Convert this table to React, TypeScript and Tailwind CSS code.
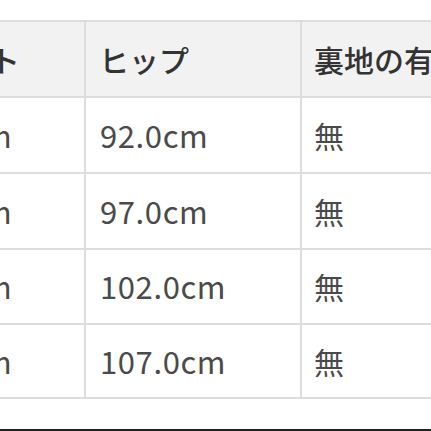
import React from 'react';

const rows = [
    { waist: '72.0cm', hip: '92.0cm', lining: '無', h: 'h-[76px]' },
    { waist: '77.0cm', hip: '97.0cm', lining: '無', h: 'h-[76px]' },
    { waist: '82.0cm', hip: '102.0cm', lining: '無', h: 'h-[75px]' },
    { waist: '87.0cm', hip: '107.0cm', lining: '無', h: 'h-[74px]' },
];

const App = () => {
    return (
        <div
            className="w-[431px] h-[431px] overflow-hidden bg-white flex flex-col"
            style={{ fontFamily: '"Noto Sans CJK JP", "Noto Sans", sans-serif' }}
        >
            <div className="pt-[20px] flex-1">
                <div className="-ml-[121px] w-[650px] grid grid-cols-[207px_216px_227px] border-t-2 border-[#dddddd]">
                    <div className="h-[76px] bg-[#f2f2f2] border-b-2 border-r-2 border-[#dddddd] flex items-center pl-[21px] text-[30px] font-medium text-[#333] whitespace-nowrap">
                        ウエスト
                    </div>
                    <div className="h-[76px] bg-[#f2f2f2] border-b-2 border-r-2 border-[#dddddd] flex items-center pl-[13px] text-[30px] font-medium text-[#333]">
                        ヒップ
                    </div>
                    <div className="h-[76px] bg-[#f2f2f2] border-b-2 border-[#dddddd] flex items-center pl-[12px] text-[30px] font-medium text-[#333] whitespace-nowrap">
                        裏地の有無
                    </div>

                    {rows.map((r) => (
                        <React.Fragment key={r.hip}>
                            <div className={`${r.h} border-b-2 border-r-2 border-[#dddddd] flex items-center pl-[25px] text-[31px] tracking-[0.6px] text-[#4a4a4a] whitespace-nowrap`}>
                                {r.waist}
                            </div>
                            <div className={`${r.h} border-b-2 border-r-2 border-[#dddddd] flex items-center pl-[14px] text-[31px] tracking-[0.6px] text-[#4a4a4a]`}>
                                {r.hip}
                            </div>
                            <div className={`${r.h} border-b-2 border-[#dddddd] flex items-center pl-[12px] text-[30px] text-[#4a4a4a]`}>
                                {r.lining}
                            </div>
                        </React.Fragment>
                    ))}
                </div>
            </div>
            <div className="h-[2px] bg-[#222]" />
        </div>
    );
};

export default App;
